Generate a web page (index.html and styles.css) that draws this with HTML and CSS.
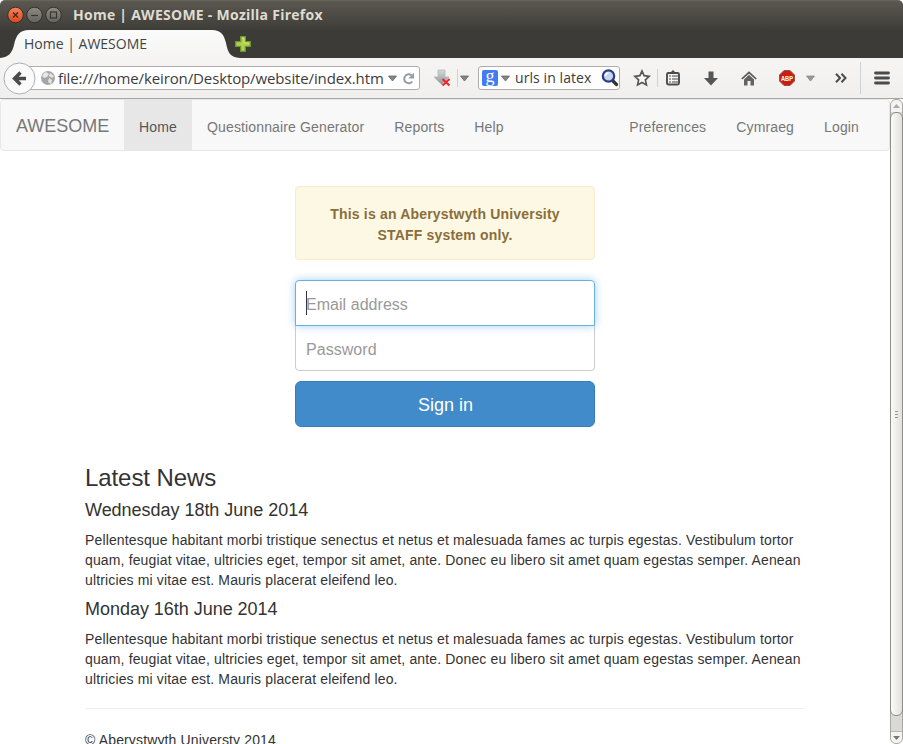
FILE: index.html
```html
<!DOCTYPE html>
<html lang="en">
<head>
<meta charset="utf-8">
<title>Home | AWESOME</title>
<link rel="stylesheet" href="styles.css">
</head>
<body>
<div class="window">
  <header class="titlebar">
    <svg class="controls" width="60" height="20" viewBox="0 0 60 20">
      <defs>
        <linearGradient id="close" x2="0" y2="1"><stop stop-color="#f58260"/><stop offset="1" stop-color="#dd4814"/></linearGradient>
        <linearGradient id="grey" x2="0" y2="1"><stop stop-color="#8d8b83"/><stop offset="1" stop-color="#65635c"/></linearGradient>
      </defs>
      <circle cx="10.5" cy="10" r="7.8" fill="url(#close)" stroke="#33312d"/>
      <path d="M8 7.500l5 5M13 7.500l-5 5" stroke="#3d2b22" stroke-width="1.3"/>
      <circle cx="29.5" cy="10" r="7.8" fill="url(#grey)" stroke="#33312d"/>
      <path d="M26 10.5h7" stroke="#383630" stroke-width="1.2"/>
      <circle cx="48.5" cy="10" r="7.8" fill="url(#grey)" stroke="#33312d"/>
      <rect x="45.5" y="7" width="6" height="6" fill="none" stroke="#383630" stroke-width="1.2"/>
    </svg>
    <span class="window-title">Home | AWESOME - Mozilla Firefox</span>
  </header>

  <div class="tabstrip">
    <div class="tab">
      <svg class="tab-shape" width="240" height="28" viewBox="0 0 240 28">
        <defs><linearGradient id="tab" x2="0" y2="1"><stop stop-color="#fbfbfb"/><stop offset="1" stop-color="#f5f4f3"/></linearGradient></defs>
        <path d="M0 28C9 27 12 23 14 15C16 5 20 0 29 0H212C221 0 224 5 226 13C228 23 230 27 240 28Z" fill="url(#tab)"/>
      </svg>
      <span class="tab-label">Home | AWESOME</span>
    </div>
    <svg class="new-tab" width="18" height="18" viewBox="0 0 18 18">
      <path d="M6.7 1.7h4.6v5h5v4.6h-5v5H6.7v-5h-5V6.7h5z" fill="#b4d04c" stroke="#6d9a30" stroke-width="1.3"/>
      <path d="M8 3h2v5h5" fill="none" stroke="#cfe477"/>
    </svg>
  </div>

  <div class="toolbar">
    <svg class="back" width="33" height="33" viewBox="0 0 33 33">
      <circle cx="16.5" cy="16.5" r="15.5" fill="#fafafa" stroke="#a8b0b8"/>
      <path d="M23 16.5H12M17.500 10.5l-6 6 6 6" fill="none" stroke="#4a4b4c" stroke-width="3.4"/>
    </svg>
    <div class="urlbar">
      <svg class="globe" width="14" height="14" viewBox="0 0 14 14">
        <circle cx="7" cy="7" r="7" fill="#a6a6a6"/>
        <path d="M5 1L8 3 6 6 3 7 1 5 3 2zM9 2l4 3-2 2-3-2zM8 7l3 2-1 4-3-2z" fill="#e5e5e5"/>
      </svg>
      <span class="url">file:///home/keiron/Desktop/website/index.htm</span>
      <svg class="caret" width="9" height="7" viewBox="0 0 9 7"><path d="M.5 1h8L4.500 6z" fill="#858585" stroke="#666" stroke-width=".8"/></svg>
      <svg class="reload" width="13" height="13" viewBox="0 0 13 13"><path d="M9.500 3.200A4.500 4.500 0 1 0 10.300 9.500" fill="none" stroke="#929dab" stroke-width="2"/><path d="M12 .8v5.700H6.300z" fill="#929dab"/></svg>
    </div>
    <svg class="dl-stop" width="18" height="18" viewBox="0 0 18 18">
      <defs><linearGradient id="arr" x2="0" y2="1"><stop stop-color="#d5d8d9"/><stop offset="1" stop-color="#8e9699"/></linearGradient></defs>
      <path d="M5 1h7v7h4L8.500 15.500 1 8h4z" fill="url(#arr)" stroke="#b0b4b5" stroke-width=".7"/>
      <path d="M9.500 10l7 6.500M16.500 10l-7 6.500" stroke="#f32222" stroke-width="2"/>
    </svg>
    <i class="sep sep-a"></i>
    <svg class="caret caret-a" width="9" height="7" viewBox="0 0 9 7"><path d="M.5 1h8L4.500 6z" fill="#858585" stroke="#666" stroke-width=".8"/></svg>
    <div class="searchbar">
      <span class="engine">g</span>
      <svg class="caret caret-b" width="9" height="7" viewBox="0 0 9 7"><path d="M.5 1h8L4.500 6z" fill="#858585" stroke="#666" stroke-width=".8"/></svg>
      <span class="query">urls in latex</span>
      <svg class="lens" width="18" height="18" viewBox="0 0 18 18">
        <path d="M11.500 11.500l4 4" stroke="#333" stroke-width="3.200" stroke-linecap="round"/>
        <circle cx="7.500" cy="7" r="5.700" fill="#c6d5ec" stroke="#2c3c88" stroke-width="2.200"/>
        <path d="M4.500 7a3 3 0 0 1 3-3" stroke="#fff" stroke-width="1.500" fill="none"/>
      </svg>
    </div>
    <svg class="star" width="18" height="18" viewBox="0 0 18 18"><path d="M9 2l2.100 4.700 5.100.6-3.800 3.500 1 5.100L9 13.400l-4.400 2.500 1-5.100L1.800 7.300l5.100-.6z" fill="#f8f8f8" stroke="#555657" stroke-width="1.700"/></svg>
    <i class="sep sep-b"></i>
    <svg class="clip" width="14" height="16" viewBox="0 0 14 16">
      <path d="M4 3L7 0l3 3z" fill="#4a4b4c"/><rect x="1" y="3" width="12" height="11.500" rx="1.500" fill="#f5f5f5" stroke="#4a4b4c" stroke-width="1.900"/>
      <path d="M3 6h2M6 6h6M3 9h2M6 9h6M3 12h2M6 12h6" stroke="#4a4b4c" stroke-width="1.200"/>
    </svg>
    <svg class="down" width="14" height="15" viewBox="0 0 14 15"><path d="M4.500 .5h5v6.500H14L7 14.500 0 7h4.500z" fill="#555657"/></svg>
    <svg class="home" width="16" height="15" viewBox="0 0 16 15"><path d="M.8 8L8 1.300 15.200 8" fill="none" stroke="#555657" stroke-width="1.700"/><path d="M3 8.500l5-4.700 5 4.700V14.500H9.500V10h-3v4.500H3z" fill="#626364"/></svg>
    <svg class="abp" width="16" height="16" viewBox="0 0 16 16">
      <path d="M5 .5h6L15.500 5v6L11 15.500H5L.5 11V5z" fill="#cb1e12" stroke="#8b5550"/>
      <text x="2" y="10.900" textLength="12" lengthAdjust="spacingAndGlyphs" class="abp-text">ABP</text>
    </svg>
    <svg class="caret caret-c" width="9" height="7" viewBox="0 0 9 7"><path d="M.5 1h8L4.500 6z" fill="#999" stroke="#888" stroke-width=".8"/></svg>
    <svg class="more" width="12" height="10" viewBox="0 0 12 10"><path d="M1 .8L5 5 1 9.200M6.500 .8l4 4.200-4 4.200" fill="none" stroke="#4a4b4c" stroke-width="2"/></svg>
    <i class="sep sep-c"></i>
    <svg class="menu" width="16" height="14" viewBox="0 0 16 14"><path d="M1.500 2h13M1.500 7h13M1.500 12h13" stroke="#4a4b4c" stroke-width="2.800" stroke-linecap="round"/></svg>
  </div>

  <div class="viewport">
    <div class="page">
      <nav class="navbar">
        <a class="brand">AWESOME</a>
        <a class="nav-item active">Home</a>
        <a class="nav-item">Questionnaire Generator</a>
        <a class="nav-item">Reports</a>
        <a class="nav-item">Help</a>
        <a class="nav-item first-right">Preferences</a>
        <a class="nav-item">Cymraeg</a>
        <a class="nav-item">Login</a>
      </nav>
      <div class="container">
        <form class="signin">
          <div class="alert">This is an Aberystwyth University<br>STAFF system only.</div>
          <div class="field email"><i class="cursor"></i><span>Email address</span></div>
          <div class="field password"><span>Password</span></div>
          <button class="submit" type="button">Sign in</button>
        </form>
        <h3>Latest News</h3>
        <h4>Wednesday 18th June 2014</h4>
        <p>Pellentesque habitant morbi tristique senectus et netus et malesuada fames ac turpis egestas. Vestibulum tortor<br>quam, feugiat vitae, ultricies eget, tempor sit amet, ante. Donec eu libero sit amet quam egestas semper. Aenean<br>ultricies mi vitae est. Mauris placerat eleifend leo.</p>
        <h4>Monday 16th June 2014</h4>
        <p>Pellentesque habitant morbi tristique senectus et netus et malesuada fames ac turpis egestas. Vestibulum tortor<br>quam, feugiat vitae, ultricies eget, tempor sit amet, ante. Donec eu libero sit amet quam egestas semper. Aenean<br>ultricies mi vitae est. Mauris placerat eleifend leo.</p>
        <hr>
        <p>© Aberystwyth Universty 2014</p>
      </div>
    </div>
    <div class="scrollbar">
      <div class="scroll-up"><svg width="7" height="4" viewBox="0 0 7 4"><path d="M0 4L3.500 0 7 4z" fill="#aaa"/></svg></div>
      <div class="thumb"><i></i><i></i><i></i></div>
      <div class="scroll-down"><svg width="7" height="4" viewBox="0 0 7 4"><path d="M0 0h7L3.500 4z" fill="#777"/></svg></div>
    </div>
  </div>
</div>
</body>
</html>
```
FILE: styles.css
```css
* { box-sizing: border-box; }
html, body { margin: 0; height: 100%; overflow: hidden; }
body { font: 14px/20px "Liberation Sans", Arial, sans-serif; color: #333; background: #fff; }
svg, i { display: block; flex: none; }

.window { width: 903px; height: 744px; display: flex; flex-direction: column; overflow: hidden; }

.titlebar { height: 30px; flex: none; display: flex; align-items: center; padding-left: 5px; background: linear-gradient(#5b5850, #3e3d38); border-top: 1px solid #67645b; border-radius: 5px 5px 0 0; }
.controls { margin-top: -2px; }
.window-title { margin: -2px 0 0 8px; font: bold 14px/20px "Open Sans", sans-serif; letter-spacing: .26px; color: #dfdbd2; white-space: nowrap; }

.tabstrip { height: 28px; flex: none; display: flex; background: #3c3b37; }
.tab { display: grid; width: 234px; }
.tab > * { grid-area: 1 / 1; }
.tab-label { padding: 3px 0 0 24px; font: 14px/22px "Open Sans", sans-serif; color: #444; white-space: nowrap; z-index: 1; }
.new-tab { margin: 5px 0 0 0; }

.toolbar { height: 41px; flex: none; display: flex; align-items: center; background: linear-gradient(#f6f5f4, #f0efed); border-bottom: 1px solid #aaa69f; color: #3c3c3c; }
.back { margin-left: 3px; z-index: 1; }
.urlbar { width: 400px; height: 24px; margin-left: -16px; padding-left: 20px; display: flex; align-items: center; flex: none; background: #fff; border: 1px solid #b0ada8; border-radius: 3px; }
.url { width: 325px; margin-left: 3px; font: 15px/22px "Open Sans", sans-serif; letter-spacing: -.12px; white-space: nowrap; }
.urlbar .caret { margin-left: 5px; }
.reload { margin-left: 5px; }
.dl-stop { margin-left: 13px; }
.sep { width: 1px; background: #cdd2d6; height: 18px; }
.sep-a { margin-left: 6px; }
.caret-a { margin-left: 2px; }
.searchbar { width: 142px; height: 24px; margin-left: 9px; padding-left: 3px; display: flex; align-items: center; flex: none; background: #fff; border: 1px solid #b0ada8; border-radius: 3px; }
.engine { width: 16px; height: 16px; border-radius: 2px; background: #437bf4; color: #fff; font: 18px/12px "Liberation Serif", serif; text-align: center; }
.caret-b { margin-left: 3px; }
.query { width: 79px; margin-left: 5px; font: 14px/22px "Open Sans", sans-serif; letter-spacing: .08px; white-space: nowrap; }
.lens { margin-left: 7px; }
.star { margin-left: 13px; }
.sep-b { margin-left: 6px; }
.clip { margin-left: 8px; }
.down { margin-left: 24px; }
.home { margin-left: 23px; }
.abp { margin-left: 22px; }
.abp-text { font: bold 8px "Liberation Sans", sans-serif; fill: #fff; }
.caret-c { margin-left: 11px; }
.more { margin-left: 20px; }
.sep-c { margin-left: 13px; height: 32px; }
.menu { margin-left: 13px; }

.viewport { height: 645px; display: flex; }
.page { width: 890px; overflow: hidden; }
.navbar { height: 52px; display: flex; background: #f8f8f8; border: 1px solid #e7e7e7; border-radius: 4px; color: #777; }
.brand { width: 123px; padding: 16px 15px 14px; font-size: 18px; white-space: nowrap; flex: none; }
.nav-item { padding: 17px 15px 13px; white-space: nowrap; letter-spacing: .14px; }
.active { width: 68px; background: #e7e7e7; color: #555; }
.first-right { margin-left: auto; }
.nav-item:last-child { margin-right: 15px; }

.container { width: 720px; margin: 0 auto; }
.signin { width: 300px; margin: 35px auto 0; display: flex; flex-direction: column; }
.alert { height: 74px; padding: 17px 15px; line-height: 21px; letter-spacing: .18px; text-align: center; font-weight: bold; color: #8a6d3b; background: #fcf8e3; border: 1px solid #faebcc; border-radius: 4px; }
.field { height: 46px; display: flex; align-items: center; padding: 3px 0 0 10px; font-size: 16px; letter-spacing: .04px; color: #999; background: #fff; border: 1px solid #ccc; }
.email { margin-top: 20px; position: relative; border-color: #66afe9; border-radius: 4px 4px 0 0; box-shadow: 0 0 8px rgba(102, 175, 233, .6); }
.password { margin-top: -1px; border-radius: 0 0 4px 4px; }
.cursor { width: 1px; height: 24px; margin: -4px -1px 0 0; background: #333; }
.submit { height: 46px; margin-top: 10px; padding: 2px 0 0 1px; font: 18px/24px "Liberation Sans", Arial, sans-serif; color: #fff; background: #428bca; border: 1px solid #357ebd; border-radius: 6px; }
h3, h4 { font-weight: normal; line-height: 1.1; white-space: nowrap; }
h3 { font-size: 24px; letter-spacing: -.08px; margin: 38px 0 10px; }
h4 { font-size: 18px; letter-spacing: -.03px; margin: 10px 0 9px; }
p { margin: 0 0 10px; letter-spacing: .143px; white-space: nowrap; }
hr { margin: 19px 0 21px; border: 0; border-top: 1px solid #eee; }

.scrollbar { width: 13px; height: 645px; display: flex; flex-direction: column; background: #dbd9d6; border: 1px solid #a9a7a3; border-radius: 6px; }
.scroll-up, .scroll-down { height: 12px; display: flex; align-items: center; justify-content: center; background: #f5f4f2; border-radius: 6px 6px 0 0; }
.thumb { height: 604px; margin: 0 -1px; display: flex; flex-direction: column; align-items: center; justify-content: center; gap: 2px; background: linear-gradient(90deg, #fafaf9, #e3e1df); border: 1px solid #8e8c88; border-radius: 6px; }
.thumb i { width: 3px; height: 1px; background: #999; }
.scroll-down { margin-top: auto; border-radius: 0 0 6px 6px; border-top: 1px solid #b9b7b3; }
```
